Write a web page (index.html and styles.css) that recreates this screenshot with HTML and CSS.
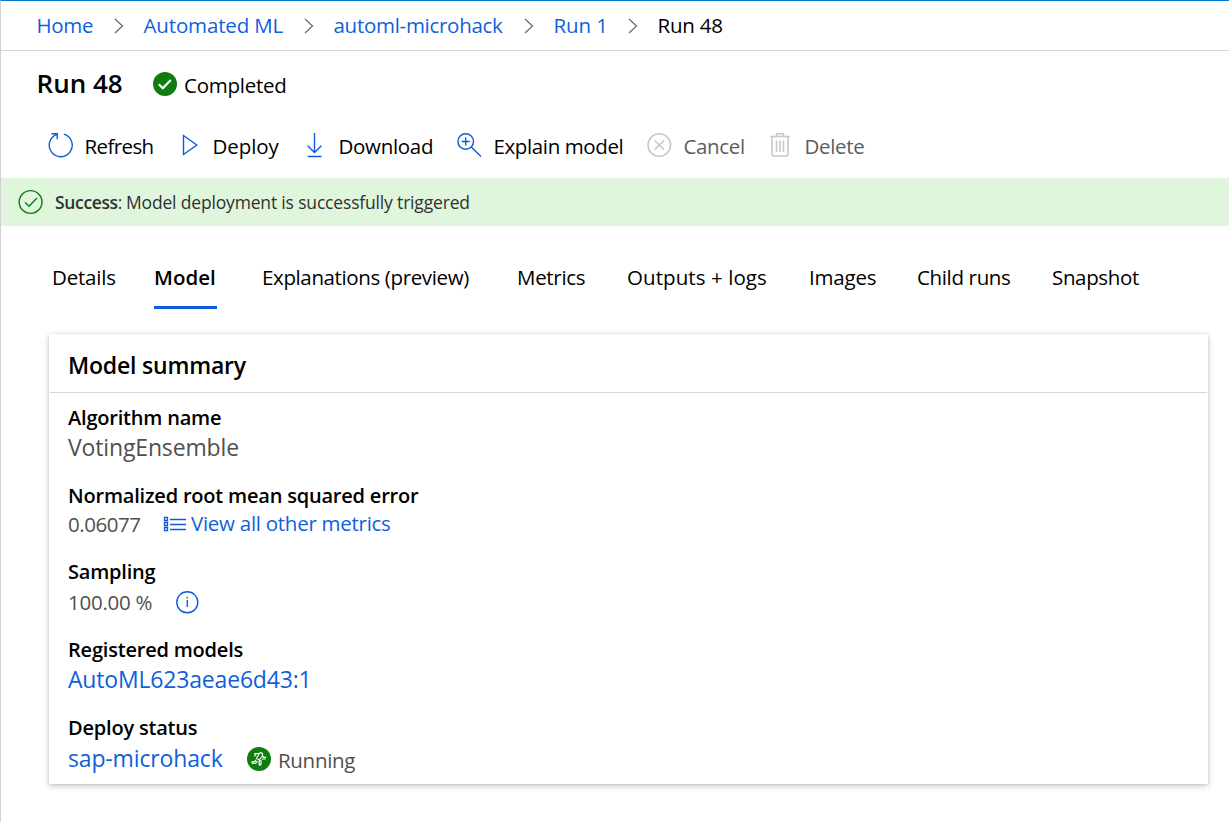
FILE: index.html
```html
<!DOCTYPE html>
<html lang="en">
<head>
<meta charset="utf-8">
<title>Run 48</title>
<link rel="stylesheet" href="styles.css">
</head>
<body>
<div class="page">
  <nav class="breadcrumb">
    <a class="crumb c-home">Home</a>
    <svg class="chev" viewBox="0 0 10 16"><path d="M1 1l7.500 7L1 15"/></svg>
    <a class="crumb c-automl">Automated ML</a>
    <svg class="chev" viewBox="0 0 10 16"><path d="M1 1l7.500 7L1 15"/></svg>
    <a class="crumb c-exp">automl-microhack</a>
    <svg class="chev" viewBox="0 0 10 16"><path d="M1 1l7.500 7L1 15"/></svg>
    <a class="crumb c-run1">Run 1</a>
    <svg class="chev" viewBox="0 0 10 16"><path d="M1 1l7.500 7L1 15"/></svg>
    <span class="crumb current">Run 48</span>
  </nav>
  <header class="heading">
    <h1>Run 48</h1>
    <svg class="ok" viewBox="0 0 24 24"><circle cx="12" cy="12" r="12"/><path d="M5.800 12.300l4 4 8-8.400"/></svg>
    <span class="state">Completed</span>
  </header>
  <div class="toolbar">
    <button class="cmd b-refresh"><svg width="26" height="26" viewBox="0 0 26 26"><path d="M15.800 2.100A11.500 11.500 0 1 1 9 2.300M3.500 1.700h5.700v5.600"/></svg><span class="t">Refresh</span></button>
    <button class="cmd b-deploy"><svg width="16" height="26" viewBox="0 0 16 26"><path d="M1.500 3.500v19L14.800 13z"/></svg><span class="t">Deploy</span></button>
    <button class="cmd b-download"><svg width="16" height="26" viewBox="0 0 16 26"><path d="M8.500 1v19.500M1.700 13.700l6.800 6.800 6.800-6.800M1.700 24.500h13.800"/></svg><span class="t">Download</span></button>
    <button class="cmd b-explain"><svg width="26" height="26" viewBox="0 0 26 26"><circle cx="9.700" cy="9.500" r="7.800"/><path d="M15.300 15l9.700 9.600M9.700 5.500v8M5.700 9.500h8"/></svg><span class="t">Explain model</span></button>
    <button class="cmd b-cancel off"><svg width="26" height="26" viewBox="0 0 26 26"><circle cx="13.300" cy="13" r="11.300"/><path d="M8.500 8.200l9.600 9.600M18.100 8.200l-9.600 9.600"/></svg><span class="t">Cancel</span></button>
    <button class="cmd b-delete off"><svg width="20" height="26" viewBox="0 0 20 26"><path d="M0 4.500h20M6.500 4.500v-2.700h7v2.700M2 4.500v17.800q0 1.700 1.700 1.700h12.600q1.700 0 1.700-1.700v-17.800M6.500 8.500v11.500M10 8.500v11.500M13.500 8.500v11.500"/></svg><span class="t">Delete</span></button>
  </div>
  <div class="banner">
    <svg width="26" height="26" viewBox="0 0 26 26"><circle cx="12.600" cy="13" r="11.400"/><path d="M7 13.300l4 4 8-8.400"/></svg>
    <span class="b-strong"><b>Success</b>:</span>
    <span class="b-text">Model deployment is successfully triggered</span>
  </div>
  <div class="tabs">
    <a class="tab t-details">Details</a>
    <a class="tab t-model active">Model</a>
    <a class="tab t-expl">Explanations (preview)</a>
    <a class="tab t-metrics">Metrics</a>
    <a class="tab t-outputs">Outputs + logs</a>
    <a class="tab t-images">Images</a>
    <a class="tab t-child">Child runs</a>
    <a class="tab t-snap">Snapshot</a>
  </div>
  <section class="card">
    <h2>Model summary</h2>
    <dl>
      <dt>Algorithm name</dt>
      <dd class="algorithm big">VotingEnsemble</dd>
      <dt>Normalized root mean squared error</dt>
      <dd class="metric"><span class="value">0.06077</span>
        <svg class="list" width="23" height="16" viewBox="0 0 23 16"><path d="M1.500 1.500h3v3h-3zM1.500 6.500h3v3h-3zM1.500 11.500h3v3h-3zM7 3.500H23M7 8.500H23M7 13.500H23"/></svg>
        <a>View all other metrics</a></dd>
      <dt>Sampling</dt>
      <dd class="sampling"><span class="value">100.00 %</span>
        <svg class="info" width="24" height="24" viewBox="0 0 24 24"><circle cx="12.300" cy="12.300" r="10.500"/><path d="M12.300 10v7M12.300 6.700v1.700"/></svg></dd>
      <dt>Registered models</dt>
      <dd class="registered big"><a>AutoML623aeae6d43:1</a></dd>
      <dt>Deploy status</dt>
      <dd class="deploy big"><a class="value">sap-microhack</a>
        <svg class="run" width="24" height="24" viewBox="0 0 24 24"><circle cx="12" cy="12" r="12"/><path d="M8 9.500V6.700h4l1.500-1.200 2 1.200v2.600l1.200 1h2.500M12 7.200L9.300 11.500M15 9.500l-2.300 3M15 12h3.700M9.300 11.500l4.700 2.300v4M12.200 13.500v4.300h1.800M9 12.800l-1.200 1.700H5.200v1.700h3.500l1.800-2"/></svg>
        <span class="running">Running</span></dd>
    </dl>
  </section>
</div>
</body>
</html>
```

FILE: styles.css
```css
* { box-sizing: border-box; }
body { margin: 0; background: #fff; color: #000; font: 20.500px/28px "Open Sans", "Noto Sans", sans-serif; white-space: nowrap; }
.page { height: 822px; border-left: 1px solid #d2d2d2; border-top: 1px solid #0078d4; overflow: hidden; }
svg { fill: none; stroke: #0f5bdb; stroke-width: 1.400; flex: none; display: block; }
a { color: #0f5fdc; }

.breadcrumb { display: flex; align-items: center; height: 50px; padding-left: 35px; border-bottom: 1px solid #d6d6d6; }
.crumb { flex: none; padding: 0 0 2px .5px; }
.chev { width: 10px; height: 16px; stroke: #666; stroke-width: 1.200; margin-right: 19px; }
.c-home { width: 78px; letter-spacing: -.3px; }
.c-automl { width: 161px; letter-spacing: -.15px; }
.c-exp { width: 191px; letter-spacing: -.28px; }
.c-run1 { width: 75px; letter-spacing: -.1px; }
.current { letter-spacing: -.2px; }

.heading { display: flex; align-items: center; height: 66px; padding-left: 35px; }
h1 { margin: 0; padding: 0 0 2px .6px; width: 117px; font-size: 26px; font-weight: 600; }
.ok { width: 24px; height: 24px; fill: #107c10; stroke: none; margin-right: 7px; }
.ok path { fill: none; stroke: #fff; stroke-width: 2.200; }
.state { padding-top: 2px; letter-spacing: -.25px; }

.toolbar { display: flex; align-items: center; height: 56px; margin-bottom: 5px; padding-left: 47px; }
.cmd { display: flex; flex: none; align-items: center; border: 0; padding: 0; background: none; color: #000; font: inherit; }
.cmd .t { padding: 2px 0 0 .5px; }
.b-refresh { width: 134px; letter-spacing: -.6px; }
.b-refresh svg { margin-right: 10px; }
.b-explain svg, .b-cancel svg { margin-right: 11px; }
.b-deploy { width: 124px; letter-spacing: -.1px; }
.b-deploy svg { margin-right: 14px; }
.b-download { width: 150px; letter-spacing: -.3px; }
.b-download svg { margin-right: 16px; }
.b-explain { width: 190px; letter-spacing: -.38px; }
.b-cancel { width: 124px; letter-spacing: -.35px; }
.b-delete { letter-spacing: -.35px; }
.b-delete svg { margin-right: 14px; }
.off { color: #5c5c5c; }
.off svg { stroke: #c8c8c8; stroke-width: 1.600; }

.banner { display: flex; align-items: center; height: 48px; margin-top: 1px; padding-left: 17px; background: #dff6dd; color: #323130; font-size: 17.500px; }
.banner svg { stroke: #107c10; margin-right: 11px; }
.b-strong { width: 71px; letter-spacing: -.35px; }
.b-strong b { font-weight: 600; }
.b-text { letter-spacing: -.17px; }

.tabs { display: flex; height: 83px; padding: 37px 0 0 51px; }
.tab { color: #000; height: 46px; flex: none; }
.t-details { width: 102px; letter-spacing: -.2px; }
.t-model { width: 63px; margin-right: 45px; }
.t-expl { width: 255px; letter-spacing: -.37px; }
.t-metrics { width: 110px; letter-spacing: -.3px; }
.t-outputs { width: 182px; letter-spacing: .08px; }
.t-images { width: 108px; letter-spacing: -.2px; }
.t-child { width: 135px; letter-spacing: -.35px; }
.t-snap { letter-spacing: -.35px; }
.active { font-weight: 600; border-bottom: 3px solid #0f5bdb; }

.card { margin: 25px 21px 0 48px; height: 450px; box-shadow: 0 2px 6px rgba(0,0,0,.22), 0 0 2px rgba(0,0,0,.12); }
h2 { margin: 0 1px; height: 59px; padding: 17px 18px 0; border-bottom: 1px solid #d6d6d6; font-size: 23px; font-weight: 600; letter-spacing: -.2px; }
dl { margin: 0; padding: 10px 19px; }
dt { height: 28px; padding-top: 1px; font-size: 20px; font-weight: 600; letter-spacing: -.2px; }
dd { margin: 0; height: 50px; display: flex; align-items: flex-start; color: #505050; line-height: 30px; }
.big { font-size: 23px; }
.value { flex: none; }
.algorithm { line-height: 32px; letter-spacing: -.15px; }
.metric { height: 48px; }
.metric .value { width: 95px; letter-spacing: -.45px; }
.list { margin: 7px 5px 0 0; stroke-width: 1.300; }
.metric a { line-height: 28px; letter-spacing: -.27px; }
.sampling { line-height: 34px; }
.sampling .value { width: 107px; letter-spacing: -.25px; }
.info { margin-top: 5px; }
.registered { line-height: 32px; letter-spacing: -.18px; }
.deploy { line-height: 34px; }
.deploy .value { width: 179px; letter-spacing: -.15px; }
.run { margin: 6px 7px 0 0; stroke: #fff; stroke-width: 1.200; }
.run circle { fill: #107c10; stroke: none; }
.running { font-size: 20.500px; line-height: 38px; letter-spacing: -.3px; }
```
